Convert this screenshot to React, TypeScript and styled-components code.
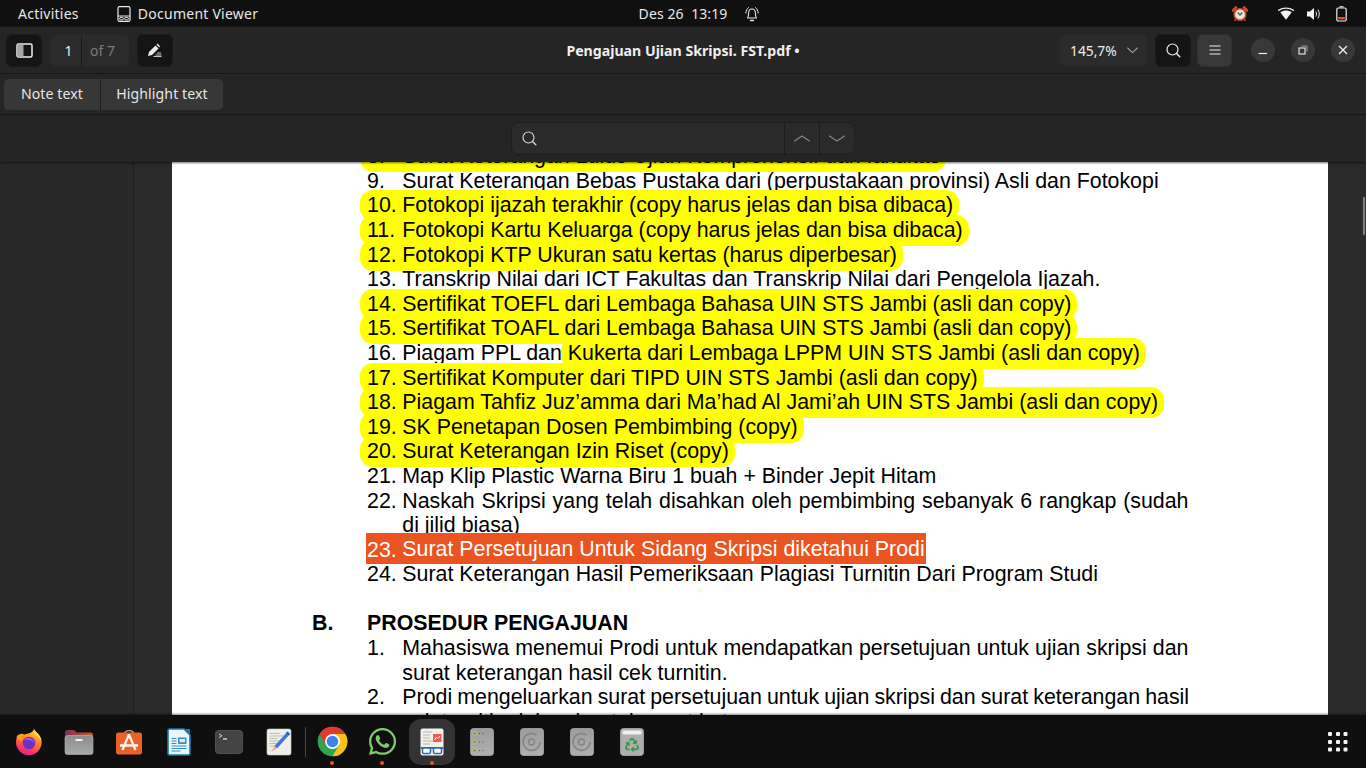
import React from "react";
import styled, { createGlobalStyle } from "styled-components";
import { FaWhatsapp, FaRecycle } from "react-icons/fa";

const Global = createGlobalStyle`
  html, body { margin: 0; padding: 0; background: #101010; overflow: hidden; }
  * { box-sizing: border-box; }
`;
const UI = `"Noto Sans", "Open Sans", sans-serif`;

const Screen = styled.div`
  width: 1366px; height: 768px; display: flex; flex-direction: column; overflow: hidden;
  font-family: ${UI}; font-size: 14px; color: #eeeeee;
`;
const TopBar = styled.header`
  height: 27px; flex: none; background: #101010; display: grid; grid-template-columns: 1fr auto 1fr; align-items: center;
  font-size: 14px; letter-spacing: .25px; color: #e8e8e8; box-shadow: inset 0 -1px 0 #161616;
`;
const TopLeft = styled.div`display: flex; align-items: center; padding-left: 18px;`;
const AppName = styled.div`display: flex; align-items: center; gap: 7px; margin-left: 38px;`;
const Clock = styled.div`display: flex; align-items: center; gap: 18px; margin-left: 32px; white-space: pre; letter-spacing: .1px;`;
const TopRight = styled.div`display: flex; align-items: center; justify-content: flex-end; padding-right: 19px;`;
const Tray = styled.span<{ $gap?: number }>`display: flex; margin-left: ${p => p.$gap ?? 0}px;`;

const HeaderBar = styled.div`
  height: 47px; flex: none; background: #252525; border-bottom: 1px solid #191919;
  display: grid; grid-template-columns: 1fr auto 1fr; align-items: center; padding: 0 6px;
`;
const Group = styled.div`display: flex; align-items: center; gap: 7px;`;
const RightGroup = styled(Group)`justify-content: flex-end; gap: 6px; margin-right: 5px;`;
const IconButton = styled.button<{ $tone?: "dark" | "light" }>`
  width: ${p => (p.$tone === "light" ? 35 : 36)}px; height: 33px; padding: 0; display: flex; align-items: center; justify-content: center;
  border-radius: 6px; color: #eee;
  background: ${p => (p.$tone === "light" ? "#383838" : "#141414")};
  border: 1px solid ${p => (p.$tone === "light" ? "#2f2f2f" : "#1b1b1b")};
`;
const PagePicker = styled.div`
  width: 81px; height: 33px; display: flex; background: #2b2b2b; border: 1px solid #262626; border-radius: 6px; align-items: center;
`;
const PageNumber = styled.span`
  width: 32px; height: 100%; border-right: 1px solid #1b1b1b; display: flex; align-items: center; justify-content: center; padding-left: 6px; font-size: 14px;
`;
const PageTotal = styled.span`color: #7b7b7b; padding-left: 8px; font-size: 14px;`;
const Title = styled.h1`margin: 0; font-size: 14.15px; font-weight: 700; color: #f0f0f0; font-family: ${UI};`;
const ZoomPicker = styled.div`
  width: 89px; height: 33px; background: #2b2b2b; border: 1px solid #272727; border-radius: 6px; display: flex; align-items: center;
  justify-content: space-between; padding: 0 9px 0 10px; font-size: 13.8px; margin-right: 1px;
`;
const WindowControls = styled.div`display: flex; gap: 16px; margin-left: 13px;`;
const RoundButton = styled.button`
  width: 24px; height: 24px; padding: 0; border: none; border-radius: 50%; background: #383838; color: #eee;
  display: flex; align-items: center; justify-content: center;
`;

const ToolBar = styled.div`
  height: 41px; flex: none; background: #252525; border-bottom: 1px solid #191919; display: flex; align-items: center; padding: 0 0 0 3px;
`;
const Segmented = styled.div`
  display: grid; grid-template-columns: 96px 123px; height: 33px; background: #373737; border: 1px solid #262626; border-radius: 6px;
`;
const Segment = styled.div`
  display: flex; align-items: center; justify-content: center; padding-bottom: 1px; font-size: 14.1px; letter-spacing: .1px; color: #e6e6e6;
  & + & { border-left: 1px solid #1f1f1f; }
`;

const FindBar = styled.div`
  height: 47px; flex: none; background: #252525; display: flex; align-items: center; justify-content: center;
  position: relative; z-index: 2; box-shadow: 0 1px 2px rgba(0,0,0,.55);
`;
const FindEntry = styled.div`
  width: 344px; height: 33px; display: flex; align-items: stretch; background: #2a2a2a; border: 1px solid #1d1d1d; border-radius: 7px;
`;
const FindInput = styled.div`flex: 1; display: flex; align-items: center; padding-left: 10px; color: #cfcfcf;`;
const FindNav = styled.div`
  width: 35px; display: flex; align-items: center; justify-content: center; border-left: 1px solid #1b1b1b; color: #8a8a8a;
`;

const Workspace = styled.main`flex: 1; min-height: 0; display: flex; background: #2a2a2a; position: relative;`;
const Sidebar = styled.aside`width: 134px; flex: none; border-right: 1px solid #1c1c1c; background: #292929;`;
const Scroller = styled.div`flex: 1; overflow: hidden; padding-left: 38px; min-width: 0;`;
const Sheet = styled.div`
  width: 1156px; height: 700px; background: #fff; margin-top: -17.8px; padding: 0 0 0 140px;
  font-family: "Liberation Sans", Arial, sans-serif; font-size: 21.37px; line-height: 24.6px; color: #000;
`;
const Line = styled.div<{ $indent?: boolean; $justify?: boolean; $squeeze?: boolean }>`
  white-space: pre; padding-left: ${p => (p.$indent ? 90.3 : 55)}px;
  ${p => p.$justify && `white-space: normal; width: 876.5px; text-align: justify; text-align-last: justify;`}
  ${p => p.$squeeze && `word-spacing: -0.87px;`}
`;
const Num = styled.span`display: inline-block; width: 35.3px;`;
const Mark = styled.span`
  background: #ffff00; padding: 3px 6px 4px 7px; margin: 0 -6px 0 -7px; border-radius: 13px;
`;
const MarkText = styled.span`position: relative; z-index: 1;`;
const Selected = styled.span`
  background: #e95420; color: #fff; padding: 4.3px 1px 2.7px; margin: 0 -1px;
`;
const Heading = styled.div`
  font-weight: 700; display: flex; margin-top: 24.6px;
`;
const HeadingLetter = styled.span`width: 55px;`;
const ScrollThumb = styled.div`
  position: absolute; right: 0; top: 34px; width: 4px; height: 40px; background: #7d7d7d; border-radius: 2px; border: 1px solid #333;
`;

const Dock = styled.nav`
  height: 53px; flex: none; background: #0f0f0f; display: flex; align-items: center; padding: 0 4px; position: relative; z-index: 2;
  box-shadow: 0 -1px 2px rgba(0,0,0,.5);
`;
const DockItem = styled.div<{ $active?: boolean; $running?: boolean }>`
  width: 50px; height: 53px; display: flex; align-items: center; justify-content: center; position: relative; flex: none;
  ${p => p.$active && `
    &::before { content: ""; position: absolute; left: 2px; top: 4px; width: 46px; height: 46px; border-radius: 12px; background: #333; }
  `}
  ${p => p.$running && `
    &::after { content: ""; position: absolute; left: 23px; top: 46px; width: 4px; height: 4px; border-radius: 50%; background: #e95420; }
  `}
  & > svg { position: relative; }
`;
const DockSeparator = styled.div`width: 1px; height: 30px; background: #444; margin: 0 1px; flex: none;`;
const ShowApps = styled.div`margin-left: auto; width: 50px; display: flex; justify-content: center; margin-right: -1px;`;

/* ---------- line icons ---------- */
const S = { fill: "none", stroke: "currentColor", strokeWidth: 1.4, strokeLinecap: "round", strokeLinejoin: "round" } as const;

const DocGlyph = () => (
  <svg width="14" height="16" viewBox="0 0 14 16"><rect x="1" y=".7" width="12" height="14.6" rx="1.6" {...S} strokeWidth={1.2} /><path d="M1 10h12" {...S} strokeWidth={1} /><rect x="2.7" y="11.4" width="3.6" height="2.4" rx=".8" {...S} strokeWidth={1} /><rect x="7.7" y="11.4" width="3.6" height="2.4" rx=".8" {...S} strokeWidth={1} /></svg>
);
const Bell = () => (
  <svg width="14" height="16" viewBox="0 0 14 16"><path d="M2.6 12c1-1.4.9-3 1-5 .1-2.3 1.5-4 3.4-4s3.3 1.7 3.4 4c.1 2 0 3.6 1 5z" {...S} strokeWidth={1.1} /><path d="M5.6 14.5h2.8" {...S} /><path d="M.8 7C1 4.5 2 2.8 3.5 1.6M13.2 7C13 4.5 12 2.8 10.5 1.600" {...S} strokeWidth={1} /></svg>
);
const Alarm = () => (
  <svg width="16" height="16" viewBox="0 0 16 16"><circle cx="8" cy="8.5" r="5.8" fill="#e8e2d8" stroke="#c8452a" strokeWidth="1.6" /><path d="M1 4.5 4 1.5M15 4.5l-3-3" stroke="#d9482a" strokeWidth="2.6" strokeLinecap="round" /><path d="M3.6 13 2.5 15M12.4 13l1.1 2" stroke="#c8452a" strokeWidth="1.4" /><path d="M5.8 6.5 8 9l2.3-2.5" fill="none" stroke="#555" strokeWidth="1.2" /></svg>
);
const Wifi = () => (
  <svg width="16" height="14" viewBox="0 0 16 14"><path d="M2.3 5.2c3.400-2.300 8-2.300 11.400 0L8 12.800z" fill="#f4f4f4" /><path d="M.6 3.400C4.800.4 11.200.4 15.400 3.400" {...S} strokeWidth={1.3} /></svg>
);
const Volume = () => (
  <svg width="16" height="14" viewBox="0 0 16 14"><path d="M1 4.5h3L8 1v12L4 9.5H1z" fill="#f2f2f2" /><path d="M10 4.8c.8 1.4.8 3 0 4.4M12.2 3c1.5 2.500 1.5 5.500 0 8" {...S} strokeWidth={1} /></svg>
);
const Battery = () => (
  <svg width="11" height="16" viewBox="0 0 11 16"><path d="M3.5.8h4" stroke="#eee" strokeWidth="1.2" /><rect x=".8" y="2" width="9.4" height="13" rx="1.5" fill="none" stroke="#eee" strokeWidth="1.2" /><rect x="2.2" y="11" width="6.6" height="2.4" fill="#e95420" /></svg>
);
const SidebarGlyph = () => (
  <svg width="17" height="15" viewBox="0 0 17 15"><rect x="1" y="1" width="15" height="13" rx="1.5" fill="none" stroke="#eee" strokeWidth="1.5" /><rect x="1.5" y="1.5" width="6" height="12" fill="#a5a5a5" /></svg>
);
const AnnotGlyph = () => (
  <svg width="16" height="14" viewBox="0 0 16 14"><path d="M1 13 2 9 8.5 2.5 11.5 5.5 5 12z" fill="#eee" /><path d="M9.5 1.5 10.5.6 13 3.2 12.2 4.4z" fill="#eee" /><path d="M10 10h4M8.5 12h6M6.5 13.5h8" stroke="#ddd" strokeWidth=".9" /></svg>
);
const SearchGlyph = ({ size = 15 }: { size?: number }) => (
  <svg width={size} height={size} viewBox="0 0 15 15"><circle cx="6.5" cy="6.5" r="5.5" {...S} strokeWidth={1.2} /><path d="m10.5 10.5 3.3 3.3" {...S} /></svg>
);
const MenuGlyph = () => (
  <svg width="12" height="10" viewBox="0 0 12 10"><path d="M.5 1h11M.5 5h11M.5 9h11" stroke="#eee" strokeWidth="1" /></svg>
);
const Caret = () => (
  <svg width="11" height="7" viewBox="0 0 11 7" style={{ color: "#9a9a9a" }}><path d="m.7 1 4.8 4.6L10.300 1" {...S} strokeWidth={1.1} /></svg>
);
const FlatChevron = ({ up }: { up?: boolean }) => (
  <svg width="16" height="7" viewBox="0 0 16 7"><path d={up ? "M.5 6 8 1l7.5 5" : "M.5 1 8 6l7.5-5"} {...S} strokeWidth={1.1} /></svg>
);

/* ---------- dock icons ---------- */
const Firefox = () => (
  <svg width="28" height="28" viewBox="0 0 28 28">
    <defs>
      <linearGradient id="ffA" x1="0.7" y1="0" x2="0.3" y2="1"><stop offset="0" stopColor="#ffd23c" /><stop offset=".4" stopColor="#ff8a22" /><stop offset=".75" stopColor="#ff3a5e" /><stop offset="1" stopColor="#e01a90" /></linearGradient>
    </defs>
    <path d="M19 .8c.6 2.5 3 3.6 5 6.2 2.6 3.3 3.1 7.2 2.2 10.5C24.8 23 20 27.2 14 27.2 6.8 27.2 1 21.4 1 14.2c0-2.300.6-4.600 1.600-6.200.4 1 .9 1.700 1.600 2.100C5 7.600 7 6.400 9.500 6.400 13.500 5.800 18.500 4.500 19 .8z" fill="url(#ffA)" />
    <path d="M1.5 9c1.500-2.500 4.600-3.800 7.500-2.800-1.800.8-1.400 2.800 0 3.800-2 .6-2.300 1.900-2 3.200C4.500 13 2.600 11.600 1.500 9z" fill="#ff9a1f" />
    <circle cx="14" cy="15" r="6.3" fill="#6c32c4" />
    <path d="M9 12c1.5-1.800 3.500-2.300 5.500-2 3 .5 5 3 4.800 5.500-1.300-2.800-4-4-7-3.500z" fill="#b153d6" />
    <path d="M19 .8c.6 2.500 3 3.600 5 6.200 1.400 1.800 2.200 3.800 2.400 5.800-1.600-3.200-4-5.600-7.400-6.800z" fill="#ffe14a" />
  </svg>
);
const Folder = () => (
  <svg width="30" height="26" viewBox="0 0 30 26">
    <defs>
      <linearGradient id="fdA" x1="0" y1="0" x2="1" y2="0"><stop offset="0" stopColor="#7d3058" /><stop offset="1" stopColor="#d4562a" /></linearGradient>
      <linearGradient id="fdB" x1="0" y1="0" x2="0" y2="1"><stop offset="0" stopColor="#8c8c8c" /><stop offset="1" stopColor="#a9a9a9" /></linearGradient>
    </defs>
    <path d="M1 3.5C1 2 2 1 3.5 1H10l2.500 2.500h14c1.400 0 2.500 1 2.500 2.500v5H1z" fill="url(#fdA)" />
    <rect x="1" y="6.5" width="28" height="19" rx="2.5" fill="url(#fdB)" stroke="#bbb" strokeWidth=".6" />
    <rect x="11.5" y="10" width="7" height="2" rx=".6" fill="#f2f2f2" />
  </svg>
);
const AppCenter = () => (
  <svg width="28" height="28" viewBox="0 0 28 28">
    <path d="M9.5 6C9.5 1.5 18.5 1.5 18.5 6" fill="none" stroke="#c8a68c" strokeWidth="1.3" />
    <rect x="1" y="4.5" width="26" height="22" rx="2.5" fill="#e8622a" />
    <path d="M14 6.500 7.500 22M14 6.500 20.500 22M5 17.500h18" stroke="#fff3ea" strokeWidth="2.3" fill="none" />
  </svg>
);
const Writer = () => (
  <svg width="24" height="28" viewBox="0 0 24 28">
    <path d="M1 2.500C1 1.500 1.600 1 2.500 1H17l6 6v18.500c0 1-.6 1.500-1.500 1.500h-19C1.600 27 1 26.500 1 25.500z" fill="#eaf4fa" stroke="#1b79a8" strokeWidth="1.6" />
    <path d="M17 1h6v6z" fill="#1b79a8" />
    <path d="M4.500 10.500h5M4.500 13h5M4.500 15.500h5M4.500 18h15M4.500 20.500h15M4.500 23h9" stroke="#3b89b8" strokeWidth="1.2" />
    <rect x="11" y="9.5" width="8.5" height="6.5" fill="#3d8dc0" />
    <rect x="12.5" y="11" width="5.5" height="3.2" fill="#d6ecf8" />
  </svg>
);
const Terminal = () => (
  <svg width="28" height="24" viewBox="0 0 28 24">
    <rect x=".5" y=".5" width="27" height="23" rx="3" fill="#444" stroke="#505050" />
    <path d="m4 4 3 1.800L4 7.600" fill="none" stroke="#ddd" strokeWidth=".9" />
    <path d="M8 9h4" stroke="#eee" strokeWidth="1.2" />
  </svg>
);
const Editor = () => (
  <svg width="26" height="28" viewBox="0 0 26 28">
    <rect x="1" y="1" width="24" height="26" rx="2" fill="#efefea" stroke="#cfcfc8" strokeWidth=".6" />
    <path d="M3.500 5.500h10M3.500 8h14M3.500 10.500h8M3.500 13h13M3.500 15.500h9M3.500 18h6" stroke="#bdbdb4" strokeWidth="1.1" />
    <path d="M21.500 3.500 24 6 11 20.500 8.500 18z" fill="#3f78d8" />
    <path d="M8.500 18 11 20.500 5 24z" fill="#e8b98a" />
    <path d="M21.500 3.500 24 6l-1.500 1.600L20 5z" fill="#2b5fb8" />
  </svg>
);
const Chrome = () => (
  <svg width="31" height="31" viewBox="0 0 48 48">
    <circle cx="24" cy="24" r="23" fill="#2da44e" />
    <path d="M24 1a23 23 0 0 1 19.920 11.500H24L14.040 29.750 4.080 12.500A23 23 0 0 1 24 1z" fill="#e5392f" />
    <path d="M43.920 12.500A23 23 0 0 1 24 47L33.960 29.750 24 12.500z" fill="#fbc116" />
    <circle cx="24" cy="24" r="11.5" fill="#fff" />
    <circle cx="24" cy="24" r="9" fill="#3b82f0" />
  </svg>
);
const Viewer = () => (
  <svg width="24" height="28" viewBox="0 0 24 28">
    <rect x=".5" y=".5" width="23" height="27" rx="2" fill="#f0efec" />
    <path d="M3 4h9M3 7h7M3 10h7M3 13h10M3 16h7" stroke="#bdb8b0" strokeWidth="1.2" />
    <rect x="13" y="6" width="8.5" height="8" fill="#ee5a4a" />
    <path d="m14.500 12 2-3 1.500 1.500 2-2.500" stroke="#fff" strokeWidth=".9" fill="none" />
    <path d="M.5 19h23v2H.5z" fill="#3a6fb8" />
    <rect x="2.5" y="20" width="8" height="5.5" rx="1.6" fill="#fff" stroke="#2f69b8" strokeWidth="1.5" />
    <rect x="13.5" y="20" width="8" height="5.5" rx="1.6" fill="#fff" stroke="#2f69b8" strokeWidth="1.5" />
  </svg>
);
const GreyTile = ({ children, id }: { children: React.ReactNode; id: string }) => (
  <svg width="24" height="28" viewBox="0 0 24 28">
    <defs><linearGradient id={id} x1="0" y1="0" x2="0" y2="1"><stop offset="0" stopColor="#9c9c9c" /><stop offset="1" stopColor="#b0b0b0" /></linearGradient></defs>
    <rect x=".5" y=".5" width="23" height="27" rx="3" fill={`url(#${id})`} stroke="#c4c4c4" strokeWidth=".6" />
    {children}
  </svg>
);
const Disks = () => (
  <GreyTile id="gtA">
    {[5.5, 14, 22.5].map(y => (
      <g key={y}>
        <circle cx="4.5" cy={y} r="2" fill="#7fa54c" stroke="#d3d3a0" strokeWidth=".5" />
        <path d={`M9 ${y}h1M12.500 ${y}h1`} stroke="#4a4a4a" strokeWidth="1" />
      </g>
    ))}
  </GreyTile>
);
const Disc = ({ id }: { id: string }) => (
  <GreyTile id={id}>
    <path d="M20 14a8.500 8.500 0 1 1-3.500-7" fill="none" stroke="#858585" strokeWidth="1.6" />
    <circle cx="11.5" cy="14" r="3" fill="none" stroke="#858585" strokeWidth="1.4" />
  </GreyTile>
);
const Trash = () => (
  <svg width="24" height="28" viewBox="0 0 24 28">
    <rect x=".5" y=".5" width="23" height="27" rx="3" fill="#aeaeae" stroke="#c4c4c4" strokeWidth=".6" />
    <rect x="2.5" y="2.5" width="19" height="4" rx="1" fill="#f0f0f0" />
  </svg>
);
const TrashIcon = styled.span`position: relative; width: 24px; height: 28px; display: flex;`;
const RecycleBadge = styled.span`
  position: absolute; left: 5px; top: 10px; width: 14px; height: 14px; color: #2f9a42; display: flex;
`;
const AppsGlyph = () => (
  <svg width="20" height="20" viewBox="0 0 20 20">
    {[2, 10, 17.5].flatMap(y => [2, 10, 17.5].map(x => <rect key={`${x}-${y}`} x={x - 2} y={y - 2} width="4" height="4" rx="1" fill="#f2f2f2" />))}
  </svg>
);

type Row = { n: string; t: string; tone?: "mark" | "selected" };
const rows: Row[] = [
  { n: "8.", t: "Surat Keterangan Lulus Ujian Komprehensif dari fakultas", tone: "mark" },
  { n: "9.", t: "Surat Keterangan Bebas Pustaka dari (perpustakaan provinsi) Asli dan Fotokopi" },
  { n: "10.", t: "Fotokopi ijazah terakhir (copy harus jelas dan bisa dibaca)", tone: "mark" },
  { n: "11.", t: "Fotokopi Kartu Keluarga (copy harus jelas dan bisa dibaca)", tone: "mark" },
  { n: "12.", t: "Fotokopi KTP Ukuran satu kertas (harus diperbesar)", tone: "mark" },
  { n: "13.", t: "Transkrip Nilai dari ICT Fakultas dan Transkrip Nilai dari Pengelola Ijazah." },
  { n: "14.", t: "Sertifikat TOEFL dari Lembaga Bahasa UIN STS Jambi (asli dan copy)", tone: "mark" },
  { n: "15.", t: "Sertifikat TOAFL dari Lembaga Bahasa UIN STS Jambi (asli dan copy)", tone: "mark" },
];
const rowsAfter: Row[] = [
  { n: "17.", t: "Sertifikat Komputer dari TIPD UIN STS Jambi (asli dan copy)", tone: "mark" },
  { n: "18.", t: "Piagam Tahfiz Juz’amma dari Ma’had Al Jami’ah UIN STS Jambi (asli dan copy)", tone: "mark" },
  { n: "19.", t: "SK Penetapan Dosen Pembimbing (copy)", tone: "mark" },
  { n: "20.", t: "Surat Keterangan Izin Riset (copy)", tone: "mark" },
  { n: "21.", t: "Map Klip Plastic Warna Biru 1 buah + Binder Jepit Hitam" },
];

const ListRow = ({ n, t, tone }: Row) => (
  <Line>
    {tone === "mark" ? <Mark><MarkText><Num>{n}</Num>{t}</MarkText></Mark> : tone === "selected" ? <Selected><Num>{n}</Num>{t}</Selected> : <><Num>{n}</Num>{t}</>}
  </Line>
);

export default function App() {
  return (
    <Screen>
      <Global />
      <TopBar>
        <TopLeft>
          <span>Activities</span>
          <AppName><DocGlyph />Document Viewer</AppName>
        </TopLeft>
        <Clock><span>Des 26  13:19</span><Bell /></Clock>
        <TopRight>
          <Alarm />
          <Tray $gap={30}><Wifi /></Tray>
          <Tray $gap={12}><Volume /></Tray>
          <Tray $gap={14}><Battery /></Tray>
        </TopRight>
      </TopBar>

      <HeaderBar>
        <Group>
          <IconButton><SidebarGlyph /></IconButton>
          <PagePicker><PageNumber>1</PageNumber><PageTotal>of 7</PageTotal></PagePicker>
          <IconButton><AnnotGlyph /></IconButton>
        </Group>
        <Title>Pengajuan Ujian Skripsi. FST.pdf •</Title>
        <RightGroup>
          <ZoomPicker><span>145,7%</span><Caret /></ZoomPicker>
          <IconButton><SearchGlyph /></IconButton>
          <IconButton $tone="light"><MenuGlyph /></IconButton>
          <WindowControls>
            <RoundButton><svg width="10" height="10" viewBox="0 0 10 10"><path d="M.5 8.5h8.5" stroke="#eee" strokeWidth="1.2" /></svg></RoundButton>
            <RoundButton><svg width="10" height="10" viewBox="0 0 10 10"><rect x="1" y="3" width="6" height="6" fill="none" stroke="#eee" strokeWidth="1.1" /><path d="M3.5 1h5.5v5.5" fill="none" stroke="#bbb" strokeWidth=".8" /></svg></RoundButton>
            <RoundButton><svg width="10" height="10" viewBox="0 0 10 10"><path d="m1 1 8 8M9 1l-8 8" stroke="#eee" strokeWidth="1.3" /></svg></RoundButton>
          </WindowControls>
        </RightGroup>
      </HeaderBar>

      <ToolBar>
        <Segmented>
          <Segment>Note text</Segment>
          <Segment>Highlight text</Segment>
        </Segmented>
      </ToolBar>

      <FindBar>
        <FindEntry>
          <FindInput><SearchGlyph /></FindInput>
          <FindNav><FlatChevron up /></FindNav>
          <FindNav><FlatChevron /></FindNav>
        </FindEntry>
      </FindBar>

      <Workspace>
        <Sidebar />
        <Scroller>
          <Sheet>
            {rows.map(r => <ListRow key={r.n} {...r} />)}
            <Line><Num>16.</Num>Piagam PPL dan <Mark><MarkText>Kukerta dari Lembaga LPPM UIN STS Jambi (asli dan copy)</MarkText></Mark></Line>
            {rowsAfter.map(r => <ListRow key={r.n} {...r} />)}
            <Line $justify><Num>22.</Num>Naskah Skripsi yang telah disahkan oleh pembimbing sebanyak 6 rangkap (sudah</Line>
            <Line $indent>di jilid biasa)</Line>
            <ListRow n="23." t="Surat Persetujuan Untuk Sidang Skripsi diketahui Prodi" tone="selected" />
            <ListRow n="24." t="Surat Keterangan Hasil Pemeriksaan Plagiasi Turnitin Dari Program Studi" />
            <Heading><HeadingLetter>B.</HeadingLetter>PROSEDUR PENGAJUAN</Heading>
            <Line $justify><Num>1.</Num>Mahasiswa menemui Prodi untuk mendapatkan persetujuan untuk ujian skripsi dan</Line>
            <Line $indent>surat keterangan hasil cek turnitin.</Line>
            <Line $squeeze><Num>2.</Num>Prodi mengeluarkan surat persetujuan untuk ujian skripsi dan surat keterangan hasil</Line>
            <Line $indent>cek turnitin dalam bentuk surat keterangan</Line>
          </Sheet>
        </Scroller>
        <ScrollThumb />
      </Workspace>

      <Dock>
        <DockItem><Firefox /></DockItem>
        <DockItem><Folder /></DockItem>
        <DockItem><AppCenter /></DockItem>
        <DockItem><Writer /></DockItem>
        <DockItem><Terminal /></DockItem>
        <DockItem><Editor /></DockItem>
        <DockSeparator />
        <DockItem $running><Chrome /></DockItem>
        <DockItem $running><FaWhatsapp size={31} color="#7fcb6e" /></DockItem>
        <DockItem $active $running><Viewer /></DockItem>
        <DockItem><Disks /></DockItem>
        <DockItem><Disc id="gtB" /></DockItem>
        <DockItem><Disc id="gtC" /></DockItem>
        <DockItem><TrashIcon><Trash /><RecycleBadge><FaRecycle size={14} /></RecycleBadge></TrashIcon></DockItem>
        <ShowApps><AppsGlyph /></ShowApps>
      </Dock>
    </Screen>
  );
}
